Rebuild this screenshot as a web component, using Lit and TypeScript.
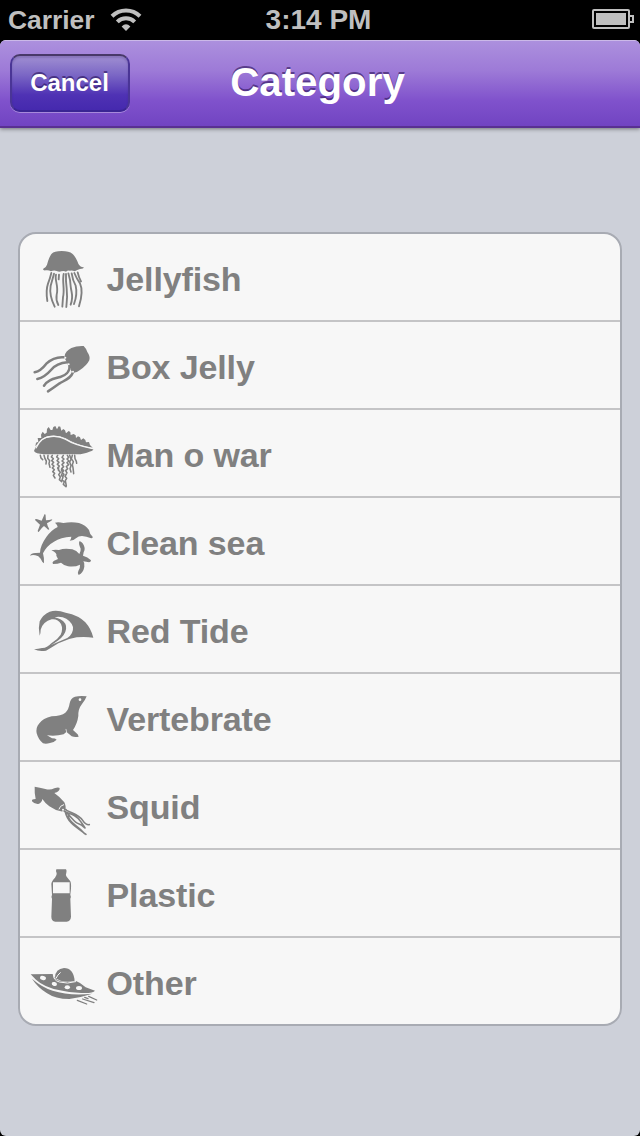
import { LitElement, html, svg, css } from "lit";
import { customElement } from "lit/decorators.js";

const stroke = (d: string, w = 5) =>
  svg`<path d=${d} fill="none" stroke="currentColor" stroke-width=${w} stroke-linecap="round" stroke-linejoin="round"/>`;
const light = (d: string, w = 3) =>
  svg`<path d=${d} fill="none" stroke="#f7f7f7" stroke-width=${w} stroke-linecap="round" stroke-linejoin="round"/>`;

const jellyfish = svg`<g transform="translate(-42 -42)">
  <path d="M99 147Q108 143 111 134Q117 111 125 101Q132 93 155 93Q178 93 187 101Q197 110 205 131Q209 140 221 142Q222 146 210 147Q202 150 194 154Q188 151 180 152Q173 150 168 155Q161 151 154 154Q148 157 140 153Q132 149 123 154Q115 149 107 151Q99 152 99 147Z"/>
  ${stroke("M124 159Q120 176 114 191Q107 211 112 243M132 161Q127 179 122 197Q117 226 134 260M138 164C133 180 147 199 140 224Q137 239 145 255M147 164L146 178M161 162C156 186 165 207 159 232L157 260M168 162Q167 180 170 205Q173 230 169 261M175 160Q182 182 182 199C184 220 192 227 182 254M185 160Q188 181 197 197Q203 222 192 252M193 159Q201 178 210 190Q221 214 207 259M203 157Q206 171 213 184", 5.6)}
</g>`;

const boxJelly = svg`<g transform="translate(0 24)">
  <path d="M122 78Q124 63 142 54Q158 47 179 48Q187 56 190 66Q200 80 196 91Q188 107 168 120Q159 128 149 128Q139 125 140 115Q130 109 131 98Q122 91 122 78Z"/>
  ${stroke("M119 82C93 80 78 91 67 101Q50 123 32 127M130 97C104 99 91 108 81 120Q62 142 40 147M137 107C138 126 123 137 109 141C88 147 73 148 60 167M148 125C141 145 124 150 107 160Q88 174 72 184", 7.6)}
  <circle cx="124" cy="83" r="3" fill="#f7f7f7"/><circle cx="134" cy="103" r="3" fill="#f7f7f7"/><circle cx="147" cy="125" r="3" fill="#f7f7f7"/>
</g>`;

const manOWar = svg`<g transform="translate(0 18)">
  <path d="M30 105Q34 91 43 83Q55 67 76 64Q97 60 119 67Q150 87 208 99Q207 106 196 107Q183 114 157 115L60 115Q34 113 30 105Z"/>
  <path d="M34 91L36 80L43 77L41 66L52 66L51 56L56 47L62 54L68 50L69 39L74 33L80 42L85 42L88 33L94 30L99 40L104 31L109 32L112 44L118 39L123 43L126 52L134 45L139 48L140 57L149 54L155 58L156 66L162 61L168 64L171 72L178 67L184 72L186 79L195 78L198 87L206 95L185 91Q150 83 125 67Q105 57 80 59Q60 61 48 75Z"/>
  ${light("M36 96Q52 62 80 62Q104 59 124 70Q152 88 206 98", 3.5)}
  ${stroke("M49 118L51 126L56 131M60 118L63 128L67 135L66 144M72 118L71 127L77 134L75 143L78 154M152 118L153 128L157 136L158 142M145 118L142 128L148 137L145 146L147 155L149 173M137 118L141 130L137 138L141 149L138 158L141 168", 4.6)}
  ${stroke("M85 118l-3 5 6 5-5 6 6 5-5 6 6 5-5 6 6 5-5 6 6 5-4 6 5 8M101 118l-3 5 6 5-5 6 6 5-5 6 6 5-5 6 4 7M118 118l-4 6 6 5-6 6 6 5-6 6 5 6-6 6 6 6-5 6 6 5-4 8M130 118l4 6-5 5 6 6-6 5 5 6-7 6 4 6-6 6 4 7M104 154l-1 8 6 7-5 7 5 7-3 8 7 6M112 162l4 8-4 8 5 6-3 8 7 5-3 8 8 7", 4.6)}
  ${stroke("M127 174l-4 7 5 6-4 7 3 16", 4.6)}
</g>`;

const cleanSea = svg`<g transform="translate(0 18)">
  <path d="M62 30Q66 30 65 38L66 49Q75 49 85 46Q85 50 77 53L69 58Q70 67 76 76Q72 79 68 73L60 66Q53 71 44 84Q39 83 43 76L48 62Q42 57 33 48Q33 44 40 46L53 50Q57 41 62 30Z"/>
  <path d="M93 56Q103 53 118 57Q143 52 165 57Q185 63 195 78Q197 91 206 98Q207 104 199 102Q188 97 174 96Q163 96 157 102Q150 110 137 110Q142 104 142 98Q110 99 90 113Q68 125 57 148Q61 162 60 178Q54 174 50 164Q44 155 34 154Q25 152 18 155Q22 146 36 147L48 146Q48 126 67 99Q82 78 101 69Q101 63 93 56Z"/>
  <path d="M82 139Q92 136 105 138Q121 132 145 136Q158 140 166 150Q171 142 170 134Q163 120 166 112Q173 112 179 123Q185 135 179 145L177 155Q191 159 201 169Q202 176 191 174L178 172Q183 177 181 188Q178 206 164 213Q159 209 163 201Q169 192 168 182Q153 190 132 187Q119 184 111 176Q102 180 87 180Q83 176 89 171L102 165L97 155Q100 147 82 139Z"/>
</g>`;

const redTide = svg`<g transform="translate(0 30)">
  <path fill-rule="evenodd" d="M47 119Q42 97 47 76Q56 56 77 47Q99 41 125 50Q165 58 184 79Q201 98 208 125Q185 122 158 124Q130 128 103 142Q83 155 66 164Q46 168 30 160Q43 158 54 156Q68 157 82 142Q101 130 110 116Q118 100 111 84Q102 68 83 70Q57 77 50 101Q50 114 47 119ZM92 64Q113 68 124 83Q131 98 119 117Q108 132 80 148Q106 136 130 126Q149 113 147 93Q140 72 116 64Q103 60 92 64Z"/>
</g>`;

const vertebrate = svg`<g transform="translate(0 30)">
  <path d="M188 37Q168 35 153 38Q139 43 137 58Q134 78 124 86Q112 96 83 97Q57 103 45 119Q35 130 38 148Q43 167 57 178Q66 181 78 177Q92 174 98 167Q95 163 84 163L69 154Q96 157 119 151L127 144Q135 149 143 157Q153 161 164 158Q163 151 156 146L147 138Q160 119 163 96Q162 75 174 60Q184 48 188 37Z"/>
  <circle cx="168" cy="47" r="4" fill="#f7f7f7"/>
  ${light("M126 136Q128 141 128 146", 2)}
</g>`;

const squid = svg`<g transform="translate(0 36)">
  <path d="M32 38Q47 41 64 45Q79 49 91 43Q103 38 107 42Q108 53 91 57Q107 68 121 85Q127 98 124 106Q119 113 111 112Q93 109 76 97Q62 86 55 75Q54 86 43 90Q31 91 24 82Q22 75 35 75Q31 56 32 38Z"/>
  ${light("M105 105Q107 95 119 92", 3)}
  ${stroke("M117 109Q123 103 128 109C147 119 164 121 176 139Q185 153 196 152M121 112C147 122 163 128 171 144Q179 155 183 162M124 113C146 132 150 145 164 149Q173 152 180 160M124 114C131 145 154 158 186 181M133 125C133 146 160 152 182 179", 4.8)}
  <circle cx="117" cy="107" r="3" fill="#f7f7f7"/>
</g>`;

const plastic = svg`<g transform="translate(0 30)">
  <path fill-rule="evenodd" d="M97 28L126 28Q129 32 127 38Q124 44 128 50L139 64Q142 70 141 86L139 104Q142 110 139 116L141 170Q140 184 128 185L94 185Q82 183 82 170L84 116Q81 110 84 104L82 72Q82 64 93 53Q99 46 98 40Q94 34 97 28ZM87 67L87 100L137 100L137 67Z"/>
</g>`;

const other = svg`<g transform="translate(-72 36)">
  <path d="M92 73L158 72Q163 88 180 93Q202 99 228 93L240 99L257 112L285 122Q280 129 255 129Q220 131 180 121Q133 112 108 89Z"/>
  <path d="M165 82Q166 57 192 54Q220 54 224 92Q203 98 182 92Q168 88 165 82Z"/>
  <path d="M96 86Q126 112 158 122Q208 138 277 131Q243 142 208 147Q166 147 140 129Q112 111 96 86Z"/>
  ${light("M160 73Q159 91 178 96Q202 103 227 95M181 68Q172 75 169 83", 3)}
  <g fill="#f7f7f7"><ellipse cx="129" cy="84" rx="9" ry="6" transform="rotate(15 129 84)"/><ellipse cx="163" cy="102" rx="8" ry="6" transform="rotate(15 163 102)"/><ellipse cx="202" cy="112" rx="8" ry="6"/><ellipse cx="237" cy="114" rx="9" ry="6"/></g>
  ${stroke("M232 151L260 162M248 147L282 158M254 142L264 146M266 139L290 150", 3.8)}
</g>`;

const CATEGORIES = [
  { label: "Jellyfish", icon: jellyfish },
  { label: "Box Jelly", icon: boxJelly },
  { label: "Man o war", icon: manOWar },
  { label: "Clean sea", icon: cleanSea },
  { label: "Red Tide", icon: redTide },
  { label: "Vertebrate", icon: vertebrate },
  { label: "Squid", icon: squid },
  { label: "Plastic", icon: plastic },
  { label: "Other", icon: other },
];

@customElement("app-root")
export class AppRoot extends LitElement {
  static styles = css`
    :host {
      display: flex;
      flex-direction: column;
      box-sizing: border-box;
      height: 1136px;
      background: #000;
      font-family: "Liberation Sans", Arial, sans-serif;
      font-weight: bold;
    }
    .status {
      display: grid;
      grid-template-columns: 1fr auto 1fr;
      align-items: center;
      height: 40px;
      box-sizing: border-box;
      padding: 0 6px 0 8px;
      color: #bfbfbf;
      font-size: 28px;
      line-height: 40px;
    }
    .carrier {
      display: flex;
      align-items: center;
      gap: 15px;
      font-size: 26.4px;
    }
    .time {
      margin-right: 5px;
    }
    .battery {
      justify-self: end;
      margin-bottom: 2px;
    }
    svg {
      display: block;
    }
    .screen {
      flex: 1;
      display: flex;
      flex-direction: column;
      border-radius: 6px;
      overflow: hidden;
      background: #cdd0d9;
    }
    .nav {
      display: grid;
      grid-template-columns: 120px 1fr 120px;
      align-items: center;
      height: 88px;
      box-sizing: border-box;
      padding: 0 10px;
      border-top: 1px solid #cbb9e8;
      border-bottom: 2px solid #593092;
      background: linear-gradient(#ac90de, #9d7ad7 35%, #8052cc 70%, #7144c2);
      box-shadow: 0 1px 4px rgba(0, 0, 0, 0.45);
    }
    .cancel {
      height: 58px;
      box-sizing: border-box;
      margin-bottom: 2px;
      padding: 0 1px 0 0;
      border: 2px solid #4a3596;
      border-top-color: #483968;
      border-bottom-color: #3a2593;
      border-radius: 10px;
      background: linear-gradient(#a08fd2, #7b67c5 35%, #4f32b4 72%, #4529ae);
      box-shadow: 0 1px 0 rgba(255, 255, 255, 0.35), inset 0 2px 2px rgba(40, 20, 90, 0.2);
      color: #fff;
      font: inherit;
      font-size: 24px;
      text-shadow: 0 -2px 0 rgba(40, 20, 90, 0.6);
    }
    .title {
      margin: 0;
      padding: 0 5px 2px 0;
      text-align: center;
      color: #fff;
      font-size: 40.3px;
      line-height: 83px;
      text-shadow: 0 -2px 0 rgba(50, 25, 95, 0.65);
    }
    .list {
      margin: 104px 18px 0;
      padding: 0;
      list-style: none;
      border: 2px solid #a8abb3;
      border-radius: 18px;
      background: #f7f7f7;
      color: #808080;
      overflow: hidden;
    }
    .row {
      display: flex;
      align-items: center;
      gap: 2.5px;
      height: 86px;
      padding-left: 4px;
      border-bottom: 2px solid #c4c4c6;
      font-size: 34px;
      letter-spacing: -0.12px;
    }
    .row:last-child {
      border-bottom: 0;
    }
    .label {
      padding-top: 5px;
    }
  `;

  render() {
    return html`
      <div class="status">
        <div class="carrier">
          <span>Carrier</span>
          <svg width="32" height="24" viewBox="0 0 32 24" fill="none" stroke="#bfbfbf" stroke-width="4">
            <path d="M2 8.3A20 20 0 0 1 30 8.3M7.3 13.8A12.3 12.3 0 0 1 24.7 13.8" />
            <path d="M11.6 18.4Q16 14 20.4 18.4L16 23Z" fill="#bfbfbf" stroke="none" />
          </svg>
        </div>
        <span class="time">3:14 PM</span>
        <svg class="battery" width="42" height="20" viewBox="0 0 42 20">
          <rect x="1" y="1" width="36" height="18" rx="1" fill="none" stroke="#bfbfbf" stroke-width="2" />
          <rect x="4" y="4" width="30" height="12" fill="#bfbfbf" />
          <path d="M38 7H41V13H38" fill="none" stroke="#bfbfbf" stroke-width="2" />
        </svg>
      </div>
      <div class="screen">
        <header class="nav">
          <button class="cancel">Cancel</button>
          <h1 class="title">Category</h1>
        </header>
        <ul class="list">
          ${CATEGORIES.map(
            (c) => html`<li class="row">
              <svg width="80" height="86" viewBox="0 0 240 258" fill="currentColor">${c.icon}</svg>
              <span class="label">${c.label}</span>
            </li>`
          )}
        </ul>
      </div>
    `;
  }
}
